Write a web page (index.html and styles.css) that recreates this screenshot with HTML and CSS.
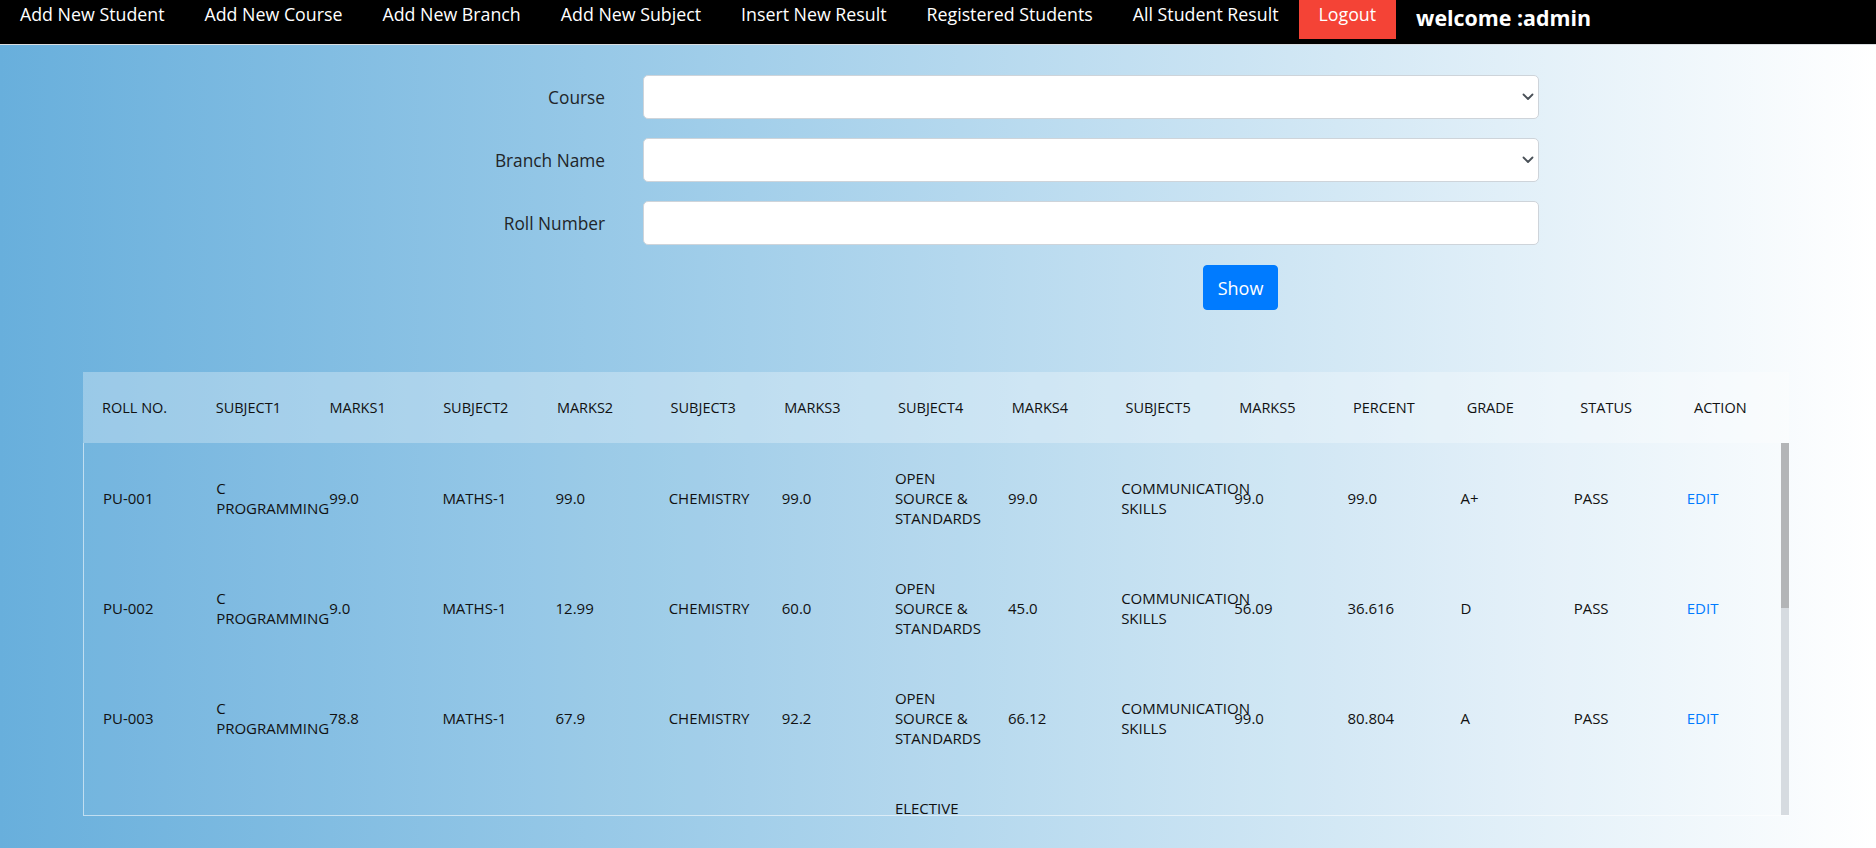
FILE: index.html
```html
<!DOCTYPE html>
<html lang="en">
<head>
<meta charset="utf-8">
<title>All Student Result</title>
<link rel="stylesheet" href="styles.css">
</head>
<body>
<nav class="topnav">
  <a class="nav-link" href="#">Add New Student</a>
  <a class="nav-link" href="#">Add New Course</a>
  <a class="nav-link" href="#">Add New Branch</a>
  <a class="nav-link" href="#">Add New Subject</a>
  <a class="nav-link" href="#">Insert New Result</a>
  <a class="nav-link" href="#">Registered Students</a>
  <a class="nav-link" href="#">All Student Result</a>
  <a class="nav-link logout" href="#">Logout</a>
  <span class="welcome">welcome :admin</span>
</nav>

<main class="page">
  <form class="search-form">
    <label class="form-label" for="course">Course</label>
    <div class="select-wrap">
      <select id="course" class="form-control"><option></option></select>
      <svg class="chevron" viewBox="0 0 12 8" width="12" height="8"><path d="M1.5 1.5 6 6l4.5-4.5" fill="none" stroke="#495057" stroke-width="1.8" stroke-linecap="round" stroke-linejoin="round"/></svg>
    </div>

    <label class="form-label" for="branch">Branch Name</label>
    <div class="select-wrap">
      <select id="branch" class="form-control"><option></option></select>
      <svg class="chevron" viewBox="0 0 12 8" width="12" height="8"><path d="M1.5 1.5 6 6l4.5-4.5" fill="none" stroke="#495057" stroke-width="1.8" stroke-linecap="round" stroke-linejoin="round"/></svg>
    </div>

    <label class="form-label" for="roll">Roll Number</label>
    <input id="roll" class="form-control" type="text">

    <div class="form-actions">
      <button class="btn-show" type="button">Show</button>
    </div>
  </form>

  <section class="results">
    <table class="results-head">
      <thead>
        <tr>
          <th>Roll No.</th><th>Subject1</th><th>Marks1</th><th>Subject2</th><th>Marks2</th>
          <th>Subject3</th><th>Marks3</th><th>Subject4</th><th>Marks4</th><th>Subject5</th>
          <th>Marks5</th><th>Percent</th><th>Grade</th><th>Status</th><th>Action</th>
        </tr>
      </thead>
    </table>
    <div class="results-scroll">
      <div class="results-viewport">
        <table class="results-body">
          <tbody>
            <tr>
              <td>PU-001</td><td>C PROGRAMMING</td><td>99.0</td><td>MATHS-1</td><td>99.0</td>
              <td>CHEMISTRY</td><td>99.0</td><td>OPEN SOURCE &amp; STANDARDS</td><td>99.0</td><td>COMMUNICATION SKILLS</td>
              <td>99.0</td><td>99.0</td><td>A+</td><td>PASS</td><td><a class="edit" href="#">Edit</a></td>
            </tr>
            <tr>
              <td>PU-002</td><td>C PROGRAMMING</td><td>9.0</td><td>MATHS-1</td><td>12.99</td>
              <td>CHEMISTRY</td><td>60.0</td><td>OPEN SOURCE &amp; STANDARDS</td><td>45.0</td><td>COMMUNICATION SKILLS</td>
              <td>56.09</td><td>36.616</td><td>D</td><td>PASS</td><td><a class="edit" href="#">Edit</a></td>
            </tr>
            <tr>
              <td>PU-003</td><td>C PROGRAMMING</td><td>78.8</td><td>MATHS-1</td><td>67.9</td>
              <td>CHEMISTRY</td><td>92.2</td><td>OPEN SOURCE &amp; STANDARDS</td><td>66.12</td><td>COMMUNICATION SKILLS</td>
              <td>99.0</td><td>80.804</td><td>A</td><td>PASS</td><td><a class="edit" href="#">Edit</a></td>
            </tr>
            <tr>
              <td>PU-004</td><td>PHYSICS</td><td>88.0</td><td>MATHS-2</td><td>76.5</td>
              <td>DBMS</td><td>81.0</td><td>ELECTIVE ENVIRONMENTAL SCIENCE</td><td>70.0</td><td>ENGLISH</td>
              <td>85.0</td><td>80.1</td><td>A</td><td>PASS</td><td><a class="edit" href="#">Edit</a></td>
            </tr>
            <tr>
              <td>PU-005</td><td>PHYSICS</td><td>64.5</td><td>MATHS-2</td><td>58.0</td>
              <td>DBMS</td><td>72.4</td><td>ELECTIVE ENVIRONMENTAL SCIENCE</td><td>61.0</td><td>ENGLISH</td>
              <td>70.5</td><td>65.28</td><td>B</td><td>PASS</td><td><a class="edit" href="#">Edit</a></td>
            </tr>
          </tbody>
        </table>
      </div>
      <div class="scrollbar"><div class="scrollbar-thumb"></div></div>
    </div>
  </section>
</main>
</body>
</html>
```

FILE: styles.css
```css
* {
  box-sizing: border-box;
}

html, body {
  margin: 0;
  padding: 0;
}

body {
  min-height: 100vh;
  font-family: "Open Sans", "Noto Sans", "Liberation Sans", sans-serif;
  color: #212529;
  background: linear-gradient(to right, #68afdc 0%, #a3cfea 40%, #ffffff 100%);
  overflow: hidden;
}

/* ---------- top navigation ---------- */
.topnav {
  display: flex;
  align-items: flex-start;
  height: 45px;
  background: #000;
  border-bottom: 1px solid #d9dde0;
}

.nav-link {
  display: block;
  padding: 2px 20px 12px;
  line-height: 25px;
  font-size: 17.8px;
  color: #fff;
  text-decoration: none;
  white-space: nowrap;
}

.nav-link.logout {
  background: #f44336;
}

.welcome {
  padding: 4px 0 0 20px;
  line-height: 28px;
  font-size: 21.4px;
  font-weight: 700;
  color: #fff;
  white-space: nowrap;
}

/* ---------- search form ---------- */
.page {
  padding-top: 30px;
}

.search-form {
  display: grid;
  grid-template-columns: 140px 896px;
  column-gap: 38px;
  row-gap: 19px;
  align-items: center;
  margin-left: 465px;
}

.form-label {
  text-align: right;
  font-size: 17.3px;
  color: #212529;
}

.select-wrap {
  position: relative;
}

.form-control {
  display: block;
  width: 100%;
  height: 44px;
  margin: 0;
  padding: 6px 12px;
  font-family: inherit;
  font-size: 17px;
  color: #495057;
  background: #fff;
  border: 1px solid #ced4da;
  border-radius: 5px;
  -webkit-appearance: none;
  appearance: none;
  outline: none;
}

.chevron {
  position: absolute;
  right: 5px;
  top: 18px;
  pointer-events: none;
}

.form-actions {
  grid-column: 2;
  margin-top: 1px;
  padding-left: 560px;
}

.btn-show {
  display: block;
  width: 75px;
  height: 45px;
  padding: 0;
  font-family: inherit;
  font-size: 18px;
  color: #fff;
  background: #007bff;
  border: 1px solid #007bff;
  border-radius: 4px;
}

/* ---------- results table ---------- */
.results {
  width: 1706px;
  margin: 62px 0 0 83px;
}

.results-head,
.results-body {
  width: 100%;
  table-layout: fixed;
  border-collapse: collapse;
  color: #111;
}

.results-head {
  font-size: 14.5px;
  background: rgba(255, 255, 255, 0.3);
}

.results-head th {
  height: 71px;
  padding: 0 8px 0 19px;
  text-align: left;
  font-weight: 400;
  text-transform: uppercase;
  vertical-align: middle;
}

.results-scroll {
  display: flex;
  height: 373px;
  background: rgba(255, 255, 255, 0.04);
  border-left: 1px solid rgba(255, 255, 255, 0.55);
  border-bottom: 1px solid rgba(255, 255, 255, 0.55);
}

.results-viewport {
  flex: 1;
  min-width: 0;
  overflow: hidden;
}

.results-body {
  font-size: 15px;
}

.results-body td {
  padding: 25px 12px 25px 19px;
  line-height: 20px;
  vertical-align: middle;
  text-align: left;
}

.edit {
  color: #007bff;
  text-decoration: none;
  text-transform: uppercase;
}

.scrollbar {
  flex: 0 0 8px;
  background: #d6dbe0;
}

.scrollbar-thumb {
  height: 165px;
  background: #b3b5b7;
}
```
